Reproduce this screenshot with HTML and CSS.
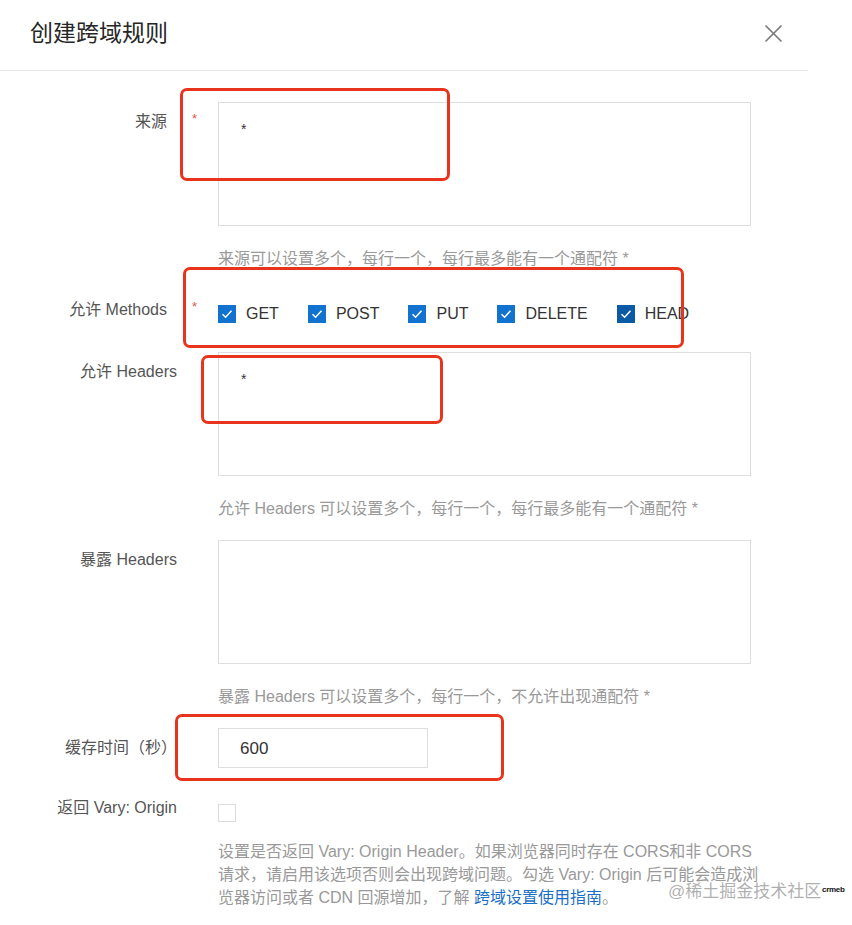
FILE: index.html
```html
<!DOCTYPE html>
<html lang="zh-CN">
<head>
<meta charset="utf-8">
<title>创建跨域规则</title>
<link rel="stylesheet" href="styles.css">
</head>
<body>
<div class="modal">
  <div class="modal-header">
    <h2 class="title">创建跨域规则</h2>
    <button class="close" aria-label="关闭">
      <svg width="19" height="19" viewBox="0 0 19 19"><path d="M1.5 1.5 L17.5 17.5 M17.5 1.5 L1.5 17.5" stroke="#7a7a7a" stroke-width="1.7" fill="none"/></svg>
    </button>
  </div>
  <div class="modal-body">
    <div class="form-item">
      <div class="label required">来源</div>
      <div class="marker">*</div>
      <div class="control">
        <div class="textarea">*</div>
        <div class="help">来源可以设置多个，每行一个，每行最多能有一个通配符 *</div>
      </div>
    </div>

    <div class="form-item">
      <div class="label required">允许 Methods</div>
      <div class="marker">*</div>
      <div class="control methods">
        <label class="check-item"><span class="box checked"><svg width="18" height="18" viewBox="0 0 18 18"><path d="M4.5 9.2 L7.6 12.2 L13.5 5.8" stroke="#fff" stroke-width="1.5" fill="none"/></svg></span>GET</label>
        <label class="check-item"><span class="box checked"><svg width="18" height="18" viewBox="0 0 18 18"><path d="M4.5 9.2 L7.6 12.2 L13.5 5.8" stroke="#fff" stroke-width="1.5" fill="none"/></svg></span>POST</label>
        <label class="check-item"><span class="box checked"><svg width="18" height="18" viewBox="0 0 18 18"><path d="M4.5 9.2 L7.6 12.2 L13.5 5.8" stroke="#fff" stroke-width="1.5" fill="none"/></svg></span>PUT</label>
        <label class="check-item"><span class="box checked"><svg width="18" height="18" viewBox="0 0 18 18"><path d="M4.5 9.2 L7.6 12.2 L13.5 5.8" stroke="#fff" stroke-width="1.5" fill="none"/></svg></span>DELETE</label>
        <label class="check-item"><span class="box checked hover"><svg width="18" height="18" viewBox="0 0 18 18"><path d="M4.5 9.2 L7.6 12.2 L13.5 5.8" stroke="#fff" stroke-width="1.5" fill="none"/></svg></span>HEAD</label>
      </div>
    </div>

    <div class="form-item">
      <div class="label">允许 Headers</div>
      <div class="marker"></div>
      <div class="control">
        <div class="textarea">*</div>
        <div class="help">允许 Headers 可以设置多个，每行一个，每行最多能有一个通配符 *</div>
      </div>
    </div>

    <div class="form-item">
      <div class="label">暴露 Headers</div>
      <div class="marker"></div>
      <div class="control">
        <div class="textarea"></div>
        <div class="help">暴露 Headers 可以设置多个，每行一个，不允许出现通配符 *</div>
      </div>
    </div>

    <div class="form-item">
      <div class="label">缓存时间（秒）</div>
      <div class="marker"></div>
      <div class="control">
        <div class="input">600</div>
      </div>
    </div>

    <div class="form-item">
      <div class="label">返回 Vary: Origin</div>
      <div class="marker"></div>
      <div class="control vary">
        <span class="box empty"></span>
        <p class="desc">设置是否返回 Vary: Origin Header。如果浏览器同时存在 CORS和非 CORS<br>请求，请启用该选项否则会出现跨域问题。勾选 Vary: Origin 后可能会造成浏<br>览器访问或者 CDN 回源增加，了解 <a class="link" href="#">跨域设置使用指南</a>。</p>
      </div>
    </div>
  </div>

  <div class="mark mark-1"></div>
  <div class="mark mark-2"></div>
  <div class="mark mark-3"></div>
  <div class="mark mark-4"></div>

  <div class="watermark">@稀土掘金技术社区</div>
  <div class="wm-logo">crmeb</div>
</div>
</body>
</html>
```

FILE: styles.css
```css
* { box-sizing: border-box; }

body {
  margin: 0;
  background: #fff;
  font-family: "Liberation Sans", "Noto Sans CJK SC", sans-serif;
  color: #333;
}

.modal {
  position: relative;
  width: 808px;
  min-height: 925px;
  background: #fff;
}

.modal-header {
  display: flex;
  align-items: flex-start;
  height: 71px;
  border-bottom: 1px solid #e8e8e8;
}

.title {
  margin: 0;
  padding: 18px 0 0 30px;
  font-size: 23px;
  line-height: 30px;
  font-weight: 400;
  color: #262626;
}

.close {
  margin: 24px 25px 0 auto;
  padding: 0;
  width: 19px;
  height: 19px;
  border: 0;
  background: none;
  display: block;
}
.close svg { display: block; }

.modal-body {
  padding-top: 31px;
}

.form-item {
  display: flex;
  align-items: flex-start;
  margin-bottom: 20px;
}

.label {
  width: 178px;
  flex: none;
  text-align: right;
  padding-top: 8px;
  padding-right: 1px;
  font-size: 16px;
  line-height: 24px;
  color: #555;
  white-space: nowrap;
}
.label.required { padding-right: 11px; }

.marker {
  width: 40px;
  flex: none;
  padding-top: 5px;
  padding-left: 14px;
  font-size: 13px;
  line-height: 24px;
  color: #e4574b;
}

.control {
  width: 533px;
  flex: none;
}

.textarea {
  height: 124px;
  border: 1px solid #dedede;
  padding: 14px 22px;
  font-size: 14px;
  line-height: 24px;
  color: #333;
}

.help {
  margin-top: 20px;
  padding-top: 1px;
  font-size: 16px;
  line-height: 23px;
  color: #999;
  white-space: nowrap;
}

.methods {
  display: flex;
  align-items: center;
  padding: 14px 0 9px;
}

.check-item {
  display: flex;
  align-items: center;
  gap: 10px;
  margin-right: 29px;
  padding-top: 1px;
  font-size: 16px;
  line-height: 18px;
  color: #333;
}
.check-item .box { margin-top: -1px; }

.box {
  width: 18px;
  height: 18px;
  flex: none;
  display: block;
}
.box svg { display: block; }
.box.checked { background: #1272d0; }
.box.checked.hover { background: #0b5aa6; }
.box.empty {
  border: 1px solid #dcdcdc;
  background: #fff;
}

.input {
  width: 210px;
  height: 40px;
  border: 1px solid #dedede;
  padding: 1px 21px 0;
  font-size: 17px;
  line-height: 38px;
  color: #333;
}

.vary { padding-top: 16px; }

.desc {
  margin: 18px 0 0;
  font-size: 16px;
  line-height: 23px;
  color: #999;
  white-space: nowrap;
}

.link {
  color: #1b6fc6;
  text-decoration: none;
}

.mark {
  position: absolute;
  border: 3px solid #e9341d;
  border-radius: 7px;
}
.mark-1 { left: 180px; top: 88px; width: 270px; height: 93px; }
.mark-2 { left: 183px; top: 267px; width: 501px; height: 81px; }
.mark-3 { left: 201px; top: 355px; width: 242px; height: 69px; }
.mark-4 { left: 175px; top: 714px; width: 329px; height: 67px; }

.watermark {
  position: absolute;
  left: 668px;
  top: 886px;
  font-size: 17px;
  line-height: 12px;
  color: rgba(140, 140, 140, 0.7);
  white-space: nowrap;
}

.wm-logo {
  position: absolute;
  left: 822px;
  top: 885px;
  font-size: 8px;
  line-height: 10px;
  font-weight: 700;
  color: #111;
  letter-spacing: -0.3px;
}
```
